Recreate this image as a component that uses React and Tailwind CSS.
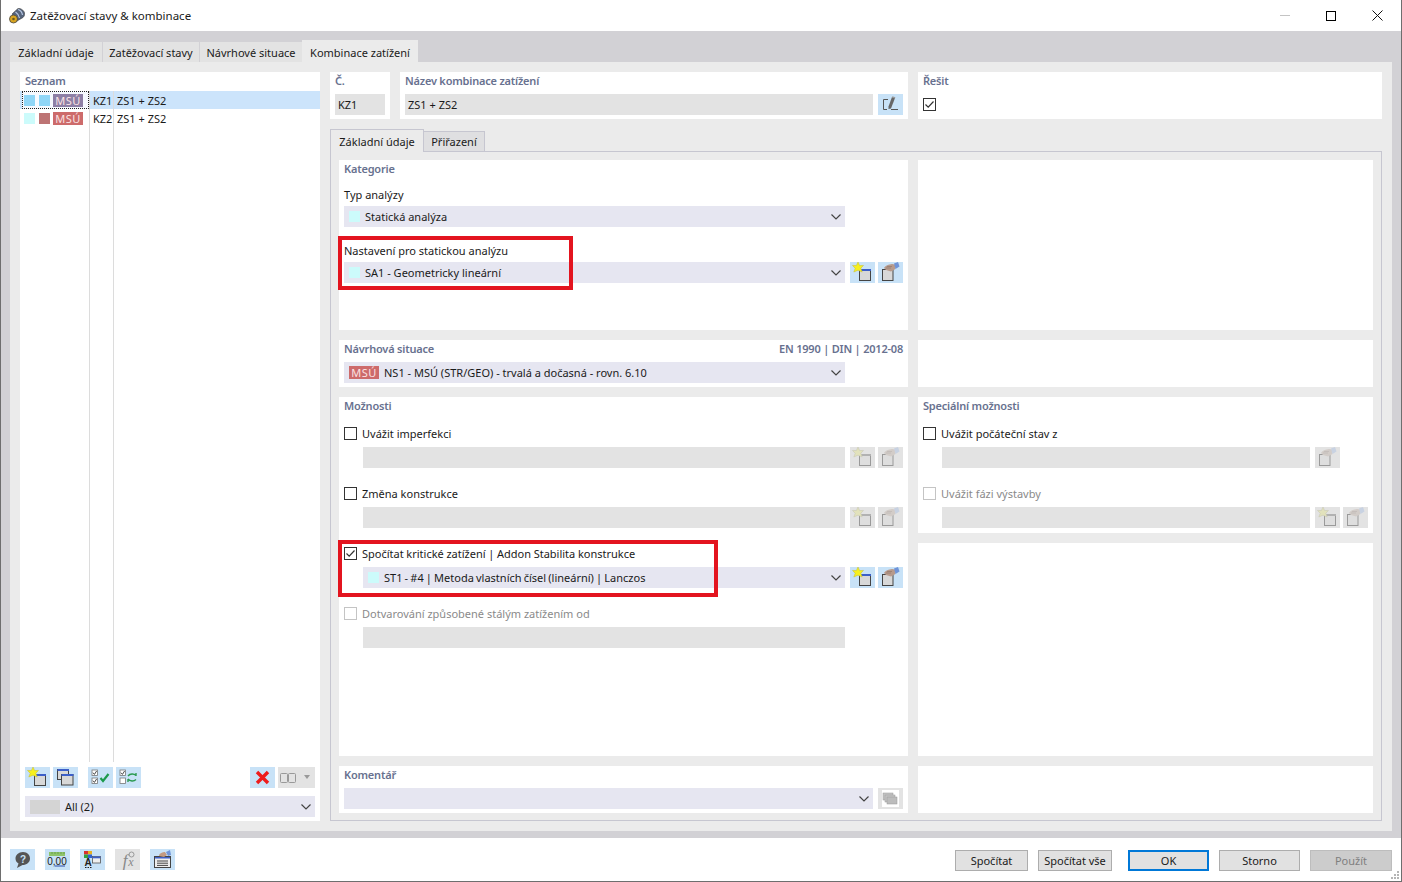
import React from 'react';

const Chevron = () => (
  <svg width="10" height="6" viewBox="0 0 10 6" className="shrink-0">
    <path d="M0.5 0.5 L5 5 L9.5 0.5" fill="none" stroke="#444" strokeWidth="1.2" />
  </svg>
);

// ikony tlacitek
const Win = ({ x = 9.5, y = 7.5, w = 11, h = 11, off, title = true }) => (
  <g opacity={off ? 0.45 : 1}>
    <rect x={x} y={y} width={w} height={h} fill="#d8d8d8" stroke="#444" strokeWidth="1" />
    {title && <rect x={x} y={y - 0.5} width={w + 0.5} height="2" fill={off ? '#777' : '#3c5fc8'} />}
  </g>
);

const NewIcon = ({ off }) => (
  <svg width="25" height="21" viewBox="0 0 25 21">
    <Win off={off} />
    <path d="M8 0 L9.6 3.6 L13.5 3.4 L10.8 6.3 L12.2 10 L8 8.2 L3.8 10 L5.2 6.3 L2.5 3.4 L6.4 3.6 Z" fill={off ? '#e2e2bc' : '#f7f01e'} stroke={off ? '#c4c4b0' : '#c4bc30'} strokeWidth="0.5" />
  </svg>
);

const HandIcon = ({ off }) => (
  <svg width="25" height="21" viewBox="0 0 25 21">
    <Win x={4.5} y={7.5} w={10.5} h={11} off={off} title={false} />
    <path d="M6 6 C7 3.5 11 2.5 14 2 L17 2.5 L17.5 7 L13 9.5 L8 8 Z" fill={off ? '#d2ccc8' : '#b79a8c'} />
    <path d="M8 6 H13 M9 4.5 H14" stroke={off ? '#bcb6b2' : '#8d7265'} strokeWidth="0.6" />
    <path d="M16 1.5 L20 0 L21.5 4.5 L17.5 7 Z" fill={off ? '#c8d2e2' : '#6f94d8'} />
  </svg>
);

const CopyIcon = () => (
  <svg width="25" height="21" viewBox="0 0 25 21">
    <Win x={4.5} y={2.5} w={11} h={10} />
    <Win x={8.5} y={7.5} w={11.5} h={10.5} />
  </svg>
);

const Box = ({ x, y, checked }) => (
  <g>
    <rect x={x} y={y} width="5.5" height="5.5" fill="#fff" stroke="#777" strokeWidth="0.8" />
    {checked && <path d={`M${x + 1} ${y + 2.7} L${x + 2.4} ${y + 4.4} L${x + 4.6} ${y + 1}`} fill="none" stroke="#333" strokeWidth="0.9" />}
  </g>
);

const CheckAllIcon = () => (
  <svg width="25" height="21" viewBox="0 0 25 21">
    <Box x={4} y={3} checked />
    <Box x={4} y={11} checked />
    <path d="M12.5 11 L15 14 L20.5 7" fill="none" stroke="#1c9a4c" strokeWidth="2.2" />
  </svg>
);

const SwapIcon = () => (
  <svg width="25" height="21" viewBox="0 0 25 21">
    <Box x={4} y={3} checked />
    <Box x={4} y={11} />
    <path d="M12 9 C14 6.5 18 6.5 20 8.5 M20 9 L20 6 M12 12 C14 14.5 18 14.5 20 12.5 M12 12 L12 15" fill="none" stroke="#2a9a50" strokeWidth="1.4" />
  </svg>
);

const DeleteIcon = () => (
  <svg width="25" height="21" viewBox="0 0 25 21">
    <path d="M7 5 L18 16 M18 5 L7 16" stroke="#ee1c1c" strokeWidth="3.4" />
  </svg>
);

const ColumnsIcon = () => (
  <svg width="37" height="21" viewBox="0 0 37 21">
    <rect x="2.5" y="6.5" width="7" height="9" rx="1" fill="none" stroke="#999" />
    <rect x="10.5" y="6.5" width="7" height="9" rx="1" fill="none" stroke="#999" />
    <path d="M26 8 L32 8 L29 12 Z" fill="#999" />
  </svg>
);

const EditIcon = () => (
  <svg width="25" height="21" viewBox="0 0 25 21">
    <path d="M10 5.5 H5.5 V15.5 H9 M13 15.5 H20" fill="none" stroke="#555" strokeWidth="1" />
    <path d="M14 3 L17 4 L13 14.5 L10.5 15 L10.5 12.5 Z" fill="#666" />
    <path d="M14.4 2.2 L17.4 3.2 L16.9 4.6 L13.9 3.6 Z" fill="#9a9a9a" />
  </svg>
);

const CommentIcon = () => (
  <svg width="25" height="21" viewBox="0 0 25 21">
    <rect x="4" y="2" width="17" height="17" fill="#fff" />
    <rect x="5" y="5" width="10" height="7" fill="#c4c4c4" stroke="#999" strokeWidth="0.5" />
    <rect x="7" y="7" width="10" height="7" fill="#c4c4c4" stroke="#999" strokeWidth="0.5" />
    <rect x="9" y="9" width="10" height="7" fill="#bcbcbc" stroke="#999" strokeWidth="0.5" />
  </svg>
);

const HelpIcon = () => (
  <svg width="25" height="21" viewBox="0 0 25 21">
    <path d="M13 3 C17.5 3 20 6 20 9.5 C20 13.5 16.5 16 12.5 16 L7 19 L8.5 14.5 C6.5 13.5 5.5 11.5 5.5 9.5 C5.5 6 8.5 3 13 3 Z" fill="#555" />
    <text x="13" y="13.5" textAnchor="middle" fontSize="10" fontWeight="bold" fill="#c8e2f7" fontFamily="Liberation Sans, sans-serif">?</text>
  </svg>
);

const UnitsIcon = () => (
  <svg width="25" height="21" viewBox="0 0 25 21">
    <rect x="4" y="3" width="16" height="4" fill="#8ec46a" />
    <path d="M7 3 V5 M10 3 V5 M13 3 V5 M16 3 V5 M19 3 V5" stroke="#5d9440" strokeWidth="0.7" />
    <text x="12" y="15.5" textAnchor="middle" fontSize="10" fill="#222" fontFamily="Liberation Sans, sans-serif">0,00</text>
    <path d="M10 17 H20" stroke="#2b4aa8" strokeWidth="1" />
  </svg>
);

const ColorsIcon = () => (
  <svg width="25" height="21" viewBox="0 0 25 21">
    <rect x="4" y="2" width="4" height="3.5" fill="#d83030" />
    <rect x="8" y="2" width="4" height="3.5" fill="#e8b020" />
    <rect x="4" y="5.5" width="4" height="3.5" fill="#30a040" />
    <rect x="8" y="5.5" width="4" height="3.5" fill="#3060d0" />
    <rect x="12.5" y="7.5" width="8" height="6.5" fill="#eee" stroke="#555" strokeWidth="0.8" />
    <rect x="12.5" y="7.5" width="8" height="1.8" fill="#3c5fc8" />
    <text x="8" y="17" textAnchor="middle" fontSize="10" fontWeight="bold" fill="#222" fontFamily="Liberation Sans, sans-serif">A</text>
    <path d="M5 18.5 H6.5 M7.5 18.5 H9 M10 18.5 H11.5" stroke="#222" strokeWidth="1" />
  </svg>
);

const FormulaIcon = () => (
  <svg width="25" height="21" viewBox="0 0 25 21">
    <text x="10" y="17" textAnchor="middle" fontSize="17" fontStyle="italic" fill="#888" fontFamily="Liberation Serif, serif">f</text>
    <text x="16" y="17" textAnchor="middle" fontSize="12" fontStyle="italic" fill="#888" fontFamily="Liberation Serif, serif">x</text>
    <circle cx="16.5" cy="5.5" r="2.5" fill="none" stroke="#999" strokeWidth="1" />
  </svg>
);

const ListIcon = () => (
  <svg width="25" height="21" viewBox="0 0 25 21">
    <rect x="4.5" y="7.5" width="16" height="11" fill="#eee" stroke="#444" />
    <rect x="5" y="8" width="15" height="1.5" fill="#3c5fc8" />
    <path d="M7 12 H18 M7 14.2 H18 M7 16.4 H18" stroke="#444" strokeWidth="1" />
    <path d="M9 7 C9 4 13 3 15 3 L17 6 L14 8 Z" fill="#c39a82" />
    <path d="M16 3 L20 1 L21 6 L18 7 Z" fill="#6f94d8" />
  </svg>
);

const IconBtn = ({ children, off, className = '' }) => (
  <div className={`w-[25px] h-[21px] shrink-0 flex items-center justify-center ${off ? 'bg-[#e3e3e3]' : 'bg-[#c8e2f7]'} ${className}`}>
    {children}
  </div>
);

const Label = ({ children, className = '' }) => (
  <div className={`text-[#68718f] font-semibold tracking-[-0.2px] leading-[14px] ${className}`}>{children}</div>
);

const Check = ({ checked, off, children, className = '' }) => (
  <div className={`flex items-center h-[14px] ${className}`}>
    <div className={`w-[13px] h-[13px] self-start shrink-0 border flex items-center justify-center ${off ? 'border-[#c4c4c4]' : 'border-[#333] bg-white'}`}>
      {checked && (
        <svg width="11" height="11" viewBox="0 0 11 11">
          <path d="M1.5 5.5 L4.2 8.2 L9.5 2.5" fill="none" stroke="#333" strokeWidth="1.2" />
        </svg>
      )}
    </div>
    {children && <span className={`ml-[5px] ${off ? 'text-[#8a8a8a]' : ''}`}>{children}</span>}
  </div>
);

const Select = ({ children, className = '' }) => (
  <div className={`h-[21px] bg-[#e6e6f1] flex items-center pr-[4px] ${className}`}>
    <div className="flex-1 flex items-center min-w-0 pt-px">{children}</div>
    <Chevron />
  </div>
);

const Swatch = () => <div className="w-[11px] h-[11px] bg-[#ccfbfb] ml-[5px] mr-[5px] -mt-px shrink-0" />;

const Input = ({ className = '', children }) => (
  <div className={`h-[21px] pt-px bg-[#e3e3e3] flex items-center ${className}`}>{children}</div>
);

const Panel = ({ className = '', children }) => <div className={`bg-white ${className}`}>{children}</div>;

const NewAndHand = ({ off }) => (
  <div className="flex gap-[3px] ml-[5px]">
    <IconBtn off={off}><NewIcon off={off} /></IconBtn>
    <IconBtn off={off}><HandIcon off={off} /></IconBtn>
  </div>
);

const MsuBadge = ({ bg = 'bg-[#cd6b6b]', className = '' }) => (
  <div className={`w-[30px] h-[13px] ${bg} text-[#fbe3e3] tracking-[0.5px] flex items-center justify-center leading-none shrink-0 ${className}`}>MSÚ</div>
);

const listRows = [
  { id: 'KZ1', sel: true },
  { id: 'KZ2', sel: false },
];

const ListRow = ({ id, sel }) => (
  <div className={`flex h-[18px] items-center ${sel ? 'bg-[#cce4fb]' : ''}`}>
    <div className={`w-[67px] h-[18px] ml-[2px] flex items-center pl-[2px] gap-[3px] shrink-0 ${sel ? 'bg-[#f6f9fe] outline-1 outline-dotted outline-[#222] -outline-offset-1' : ''}`}>
      <div className={`w-[11px] h-[11px] ${sel ? 'bg-[#8fd6f7]' : 'bg-[#ccfbfb]'}`} />
      <div className={`w-[11px] h-[11px] ml-px ${sel ? 'bg-[#8fd6f7]' : 'bg-[#bd7474]'}`} />
      <MsuBadge bg={sel ? 'bg-[#8d7fa5]' : 'bg-[#cd6b6b]'} />
    </div>
    <div className="w-[24px] h-full pt-[2px] border-l border-[#dcdcdc] pl-[3px] flex items-center shrink-0">{id}</div>
    <div className="flex-1 h-full pt-[2px] border-l border-[#dcdcdc] pl-[3px] flex items-center">ZS1 + ZS2</div>
  </div>
);

const FootBtn = ({ children, primary, off, className = '' }) => (
  <div className={`h-[21px] pt-px flex items-center justify-center border ${primary ? 'border-2 border-[#0078d7] bg-[#e1e1e1]' : off ? 'border-[#bdbdbd] bg-[#cccccc] text-[#7f7f7f]' : 'border-[#adadad] bg-[#e1e1e1]'} ${className}`}>
    {children}
  </div>
);

const App = () => {
  return (
    <div className="relative w-[1402px] h-[882px] flex flex-col bg-white border-x border-b border-[#6e6e6e] text-[#1a1a1a] text-[11px] font-['Noto_Sans',sans-serif] overflow-hidden">
      {/* Titulek okna */}
      <div className="h-[31px] shrink-0 flex items-center pl-[8px] relative">
        <svg width="16" height="16" viewBox="0 0 16 16" className="mr-[5px]">
          <path d="M3 6 L9 0.5 C11 0 15 2 15.5 5 C16 7 15 8.5 14 9.5 L8 13 Z" fill="#56647c" stroke="#3a3a3a" strokeWidth="0.6" />
          <path d="M9 1.5 C11 2 13 4 13.5 7 M6.5 4 C8 5 10 7 10.5 10" stroke="#b8c8e4" strokeWidth="1.2" fill="none" />
          <circle cx="4.5" cy="11" r="4" fill="#d9a520" stroke="#444" strokeWidth="0.8" />
          <circle cx="4.5" cy="11" r="1.3" fill="#6b5a20" />
        </svg>
        <span className="text-[11.5px]">Zatěžovací stavy &amp; kombinace</span>
        <div className="ml-auto flex items-center">
          <div className="w-[10px] h-px bg-[#c4c4c4] mr-[36px]" />
          <div className="w-[10px] h-[10px] border border-black mr-[36px]" />
          <svg width="11" height="11" viewBox="0 0 11 11" className="mr-[18px]">
            <path d="M0.5 0.5 L10.5 10.5 M10.5 0.5 L0.5 10.5" stroke="#111" strokeWidth="1" />
          </svg>
        </div>
      </div>

      {/* Obsah */}
      <div className="h-[807px] shrink-0 bg-[#d2d1d5] pt-[9px] px-[9px] pb-[7px] flex flex-col">
        <div className="flex items-end h-[22px] shrink-0">
          <div className="w-[92px] h-[20px] pt-[2px] bg-[#e3e3e3] flex items-center justify-center">Základní údaje</div>
          <div className="w-[96px] h-[20px] pt-[2px] ml-px bg-[#e3e3e3] flex items-center justify-center">Zatěžovací stavy</div>
          <div className="w-[102px] h-[20px] pt-[2px] ml-px bg-[#e3e3e3] flex items-center justify-center">Návrhové situace</div>
          <div className="w-[116px] h-[22px] pt-[4px] bg-[#ebebeb] flex items-center justify-center">Kombinace zatížení</div>
        </div>

        <div className="flex-1 bg-[#ebebeb] p-[10px] flex gap-[10px] min-h-0">
          {/* Seznam */}
          <Panel className="w-[300px] flex flex-col shrink-0">
            <Label className="pl-[5px] pt-[2px] h-[19px]">Seznam</Label>
            {listRows.map((r) => (
              <ListRow key={r.id} id={r.id} sel={r.sel} />
            ))}
            <div className="flex flex-1 min-h-0">
              <div className="w-[69px] shrink-0" />
              <div className="w-[24px] border-l border-[#dcdcdc] shrink-0" />
              <div className="flex-1 border-l border-[#dcdcdc]" />
            </div>
            <div className="flex mt-[5px] px-[5px] h-[21px]">
              <IconBtn><NewIcon /></IconBtn>
              <IconBtn className="ml-[3px]"><CopyIcon /></IconBtn>
              <IconBtn className="ml-[10px]"><CheckAllIcon /></IconBtn>
              <IconBtn className="ml-[3px]"><SwapIcon /></IconBtn>
              <IconBtn className="ml-auto"><DeleteIcon /></IconBtn>
              <div className="w-[37px] h-[21px] ml-[3px] bg-[#e3e3e3]"><ColumnsIcon /></div>
            </div>
            <Select className="mx-[5px] mt-[8px] mb-[4px]">
              <div className="w-[30px] h-[14px] -mt-px bg-[#d4d4d4] ml-[5px] mr-[5px]" />
              <span>All (2)</span>
            </Select>
          </Panel>

          {/* Detail */}
          <div className="flex-1 flex flex-col min-w-0">
            <div className="flex gap-[10px] h-[47px] shrink-0">
              <Panel className="w-[60px] px-[5px] pt-[2px]">
                <Label>Č.</Label>
                <Input className="mt-[6px] pl-[3px]">KZ1</Input>
              </Panel>
              <Panel className="w-[508px] px-[5px] pt-[2px]">
                <Label>Název kombinace zatížení</Label>
                <div className="flex mt-[6px]">
                  <Input className="flex-1 pl-[3px]">ZS1 + ZS2</Input>
                  <IconBtn className="ml-[5px]"><EditIcon /></IconBtn>
                </div>
              </Panel>
              <Panel className="flex-1 px-[5px] pt-[2px]">
                <Label>Řešit</Label>
                <Check checked className="mt-[10px]" />
              </Panel>
            </div>

            <div className="flex items-end h-[32px] shrink-0">
              <div className="w-[94px] h-[23px] pt-[3px] bg-[#ebebeb] border-x border-t border-[#c6c6d0] flex items-center justify-center relative top-px">Základní údaje</div>
              <div className="w-[61px] h-[20px] pt-px bg-[#dfdfe1] border-r border-t border-[#c6c6d0] flex items-center justify-center">Přiřazení</div>
            </div>

            <div className="flex-1 border border-[#c6c6d0] p-[8px] grid grid-cols-[569px_455px] gap-x-[10px] grid-rows-[170px_47px_359px_47px] gap-y-[10px] min-h-0">
              {/* Kategorie */}
              <Panel className="px-[5px] pt-[2px]">
                <Label>Kategorie</Label>
                <div className="mt-[12px] leading-[14px]">Typ analýzy</div>
                <Select className="mt-[4px] w-[501px]"><Swatch /><span>Statická analýza</span></Select>
                <div className="mt-[17px] leading-[14px]">Nastavení pro statickou analýzu</div>
                <div className="flex mt-[4px]">
                  <Select className="w-[501px]"><Swatch /><span>SA1 - Geometricky lineární</span></Select>
                  <NewAndHand />
                </div>
              </Panel>
              <Panel />

              {/* Navrhova situace */}
              <Panel className="px-[5px] pt-[2px]">
                <div className="flex justify-between">
                  <Label>Návrhová situace</Label>
                  <Label>EN 1990 | DIN | 2012-08</Label>
                </div>
                <Select className="mt-[6px] w-[501px]">
                  <MsuBadge className="ml-[5px] mr-[5px] -mt-px" />
                  <span>NS1 - MSÚ (STR/GEO) - trvalá a dočasná - rovn. 6.10</span>
                </Select>
              </Panel>
              <Panel />

              {/* Moznosti */}
              <Panel className="px-[5px] pt-[2px]">
                <Label>Možnosti</Label>
                <Check className="mt-[14px]">Uvážit imperfekci</Check>
                <div className="flex mt-[6px] ml-[19px]">
                  <Input className="w-[482px]" />
                  <NewAndHand off />
                </div>
                <Check className="mt-[19px]">Změna konstrukce</Check>
                <div className="flex mt-[6px] ml-[19px]">
                  <Input className="w-[482px]" />
                  <NewAndHand off />
                </div>
                <Check checked className="mt-[19px] [word-spacing:-0.2px]">Spočítat kritické zatížení | Addon Stabilita konstrukce</Check>
                <div className="flex mt-[6px] ml-[19px]">
                  <Select className="w-[482px]"><Swatch /><span className="[word-spacing:-0.7px]">ST1 - #4 | Metoda vlastních čísel (lineární) | Lanczos</span></Select>
                  <NewAndHand />
                </div>
                <Check off className="mt-[19px]">Dotvarování způsobené stálým zatížením od</Check>
                <Input className="mt-[6px] ml-[19px] w-[482px]" />
              </Panel>
              <div className="flex flex-col gap-[10px] min-h-0">
                <Panel className="h-[136px] shrink-0 px-[5px] pt-[2px]">
                  <Label>Speciální možnosti</Label>
                  <Check className="mt-[14px]">Uvážit počáteční stav z</Check>
                  <div className="flex mt-[6px] ml-[19px]">
                    <Input className="w-[368px]" />
                    <IconBtn off className="ml-[5px]"><HandIcon off /></IconBtn>
                  </div>
                  <Check off className="mt-[19px]">Uvážit fázi výstavby</Check>
                  <div className="flex mt-[6px] ml-[19px]">
                    <Input className="w-[368px]" />
                    <NewAndHand off />
                  </div>
                </Panel>
                <Panel className="flex-1" />
              </div>

              {/* Komentar */}
              <Panel className="px-[5px] pt-[2px]">
                <Label>Komentář</Label>
                <div className="flex mt-[6px]">
                  <Select className="w-[529px]" />
                  <IconBtn off className="ml-[5px]"><CommentIcon /></IconBtn>
                </div>
              </Panel>
              <Panel />
            </div>
          </div>
        </div>
      </div>

      {/* Spodni lista */}
      <div className="flex-1 flex items-center pl-[9px] pr-[9px] relative">
        <IconBtn><HelpIcon /></IconBtn>
        <IconBtn className="ml-[10px]"><UnitsIcon /></IconBtn>
        <IconBtn className="ml-[10px]"><ColorsIcon /></IconBtn>
        <IconBtn off className="ml-[10px]"><FormulaIcon /></IconBtn>
        <IconBtn className="ml-[10px]"><ListIcon /></IconBtn>
        <div className="ml-auto flex mt-[2px]">
          <FootBtn className="w-[73px]">Spočítat</FootBtn>
          <FootBtn className="w-[74px] ml-[10px]">Spočítat vše</FootBtn>
          <FootBtn primary className="w-[81px] ml-[16px]">OK</FootBtn>
          <FootBtn className="w-[81px] ml-[10px]">Storno</FootBtn>
          <FootBtn off className="w-[82px] ml-[10px]">Použít</FootBtn>
        </div>
        <svg width="9" height="9" viewBox="0 0 9 9" className="absolute right-[1px] bottom-[1px]">
          <path d="M6 0h2v2H6zM3 3h2v2H3zM6 3h2v2H6zM0 6h2v2H0zM3 6h2v2H3zM6 6h2v2H6z" fill="#b5b5b5" />
        </svg>
      </div>

      {/* Cervene zvyrazneni */}
      <div className="absolute left-[337px] top-[236px] w-[235px] h-[54px] border-4 border-[#e3141f] pointer-events-none" />
      <div className="absolute left-[337px] top-[540px] w-[380px] h-[57px] border-4 border-[#e3141f] pointer-events-none" />
    </div>
  );
};

export default App;
